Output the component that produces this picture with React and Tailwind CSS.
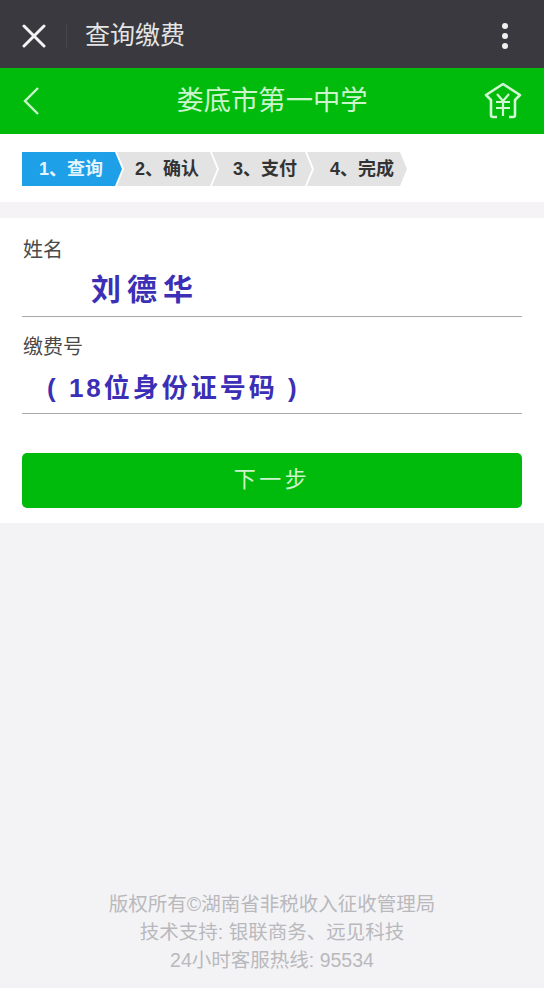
function Step({ label, className }) {
  return (
    <div className={`flex h-[34px] w-[100px] items-center text-[18px] font-bold ${className}`}>
      {label}
    </div>
  );
}

export default function App() {
  return (
    <div className="flex h-[988px] w-[544px] flex-col overflow-hidden bg-[#f3f3f5] font-['Liberation_Sans','Noto_Sans_CJK_SC',sans-serif]">
      <header className="flex h-[68px] shrink-0 items-center bg-[#39393f] pl-[22px] pr-[36px] pt-[3px]">
        <svg width="24" height="24" viewBox="0 0 24 24" fill="none" stroke="#f4f4f4" strokeWidth="3" strokeLinecap="round">
          <path d="M2 2 L22 22 M22 2 L2 22" />
        </svg>
        <div className="ml-[20px] h-[26px] w-px bg-[#46464c]" />
        <div className="ml-[18px] flex-1 text-[25px] leading-none text-[#e4e4e4]">查询缴费</div>
        <div className="flex flex-col gap-[4px]">
          <div className="h-[6px] w-[6px] rounded-full bg-[#f0f0f0]" />
          <div className="h-[6px] w-[6px] rounded-full bg-[#f0f0f0]" />
          <div className="h-[6px] w-[6px] rounded-full bg-[#f0f0f0]" />
        </div>
      </header>

      <nav className="flex h-[66px] shrink-0 items-center justify-between bg-[#00bb0b] pl-[22px] pr-[22px]">
        <div className="w-[38px]">
          <svg width="18" height="30" viewBox="0 0 18 30" fill="none" stroke="#c8f5c8" strokeWidth="2.4">
            <path d="M16 2 L3 15 L16 28" />
          </svg>
        </div>
        <div className="text-[27.3px] leading-none text-[#cdf5cd]">娄底市第一中学</div>
        <svg width="38" height="38" viewBox="0 0 38 38" fill="none" stroke="#d2f7d2" strokeWidth="2.6" strokeLinejoin="round">
          <path d="M13 35 H9 Q7 35 7 33 V18 L2 13 L19 2 L36 13 L31 18 V33 Q31 35 29 35 H25" />
          <path d="M13 12 L19 19 L25 12 M12 20 H26 M12 26 H26 M19 19 V34" strokeWidth="2.2" />
        </svg>
      </nav>

      <section className="flex h-[68px] shrink-0 items-start bg-white pl-[22px] pt-[18px]">
        <Step label="1、查询" className="bg-[#1ea0e8] pl-[17px] text-[#e6f4fd] [clip-path:polygon(0_0,93px_0,100px_50%,93px_100%,0_100%)]" />
        <Step label="2、确认" className="-ml-[5px] bg-[#e3e3e3] pl-[18px] text-[#333333] [clip-path:polygon(0_0,93px_0,100px_50%,93px_100%,0_100%,7px_50%)]" />
        <Step label="3、支付" className="-ml-[5px] bg-[#e3e3e3] pl-[21px] text-[#333333] [clip-path:polygon(0_0,93px_0,100px_50%,93px_100%,0_100%,7px_50%)]" />
        <Step label="4、完成" className="-ml-[5px] bg-[#e3e3e3] pl-[23px] text-[#333333] [clip-path:polygon(0_0,93px_0,100px_50%,93px_100%,0_100%,7px_50%)]" />
      </section>

      <div className="h-[16px] shrink-0 bg-[#f5f3f5]" />

      <main className="flex h-[305px] shrink-0 flex-col bg-white px-[22px] pt-[20px]">
        <div className="pl-px text-[20px] leading-[24px] text-[#4a4a4a]">姓名</div>
        <div className="flex h-[55px] items-start border-b border-[#a8a8a8] pl-[69px] pt-[10px] text-[30px] font-bold leading-[36px] tracking-[6px] text-[#3b30b5]">
          刘德华
        </div>
        <div className="mt-[18px] pl-px text-[20px] leading-[24px] text-[#4a4a4a]">缴费号</div>
        <div className="flex h-[55px] items-start whitespace-pre border-b border-[#a8a8a8] pl-[25px] pt-[11px] text-[26px] font-bold leading-[36px] tracking-[3px] text-[#3b30b5]">
          ( 18位身份证号码 )
        </div>
        <div className="mt-[39px] flex h-[55px] items-center justify-center rounded-[5px] bg-[#00bb0b] pb-[3px] text-[22px] tracking-[3.5px] text-[#cdf5cd]">
          下一步
        </div>
      </main>

      <footer className="mt-auto flex flex-col items-center pb-[14px] text-[19.5px] leading-[28px] text-[#b9b9bd]">
        <div>版权所有©湖南省非税收入征收管理局</div>
        <div className="whitespace-pre">技术支持: 银联商务、远见科技</div>
        <div className="whitespace-pre">24小时客服热线: 95534</div>
      </footer>
    </div>
  );
}
